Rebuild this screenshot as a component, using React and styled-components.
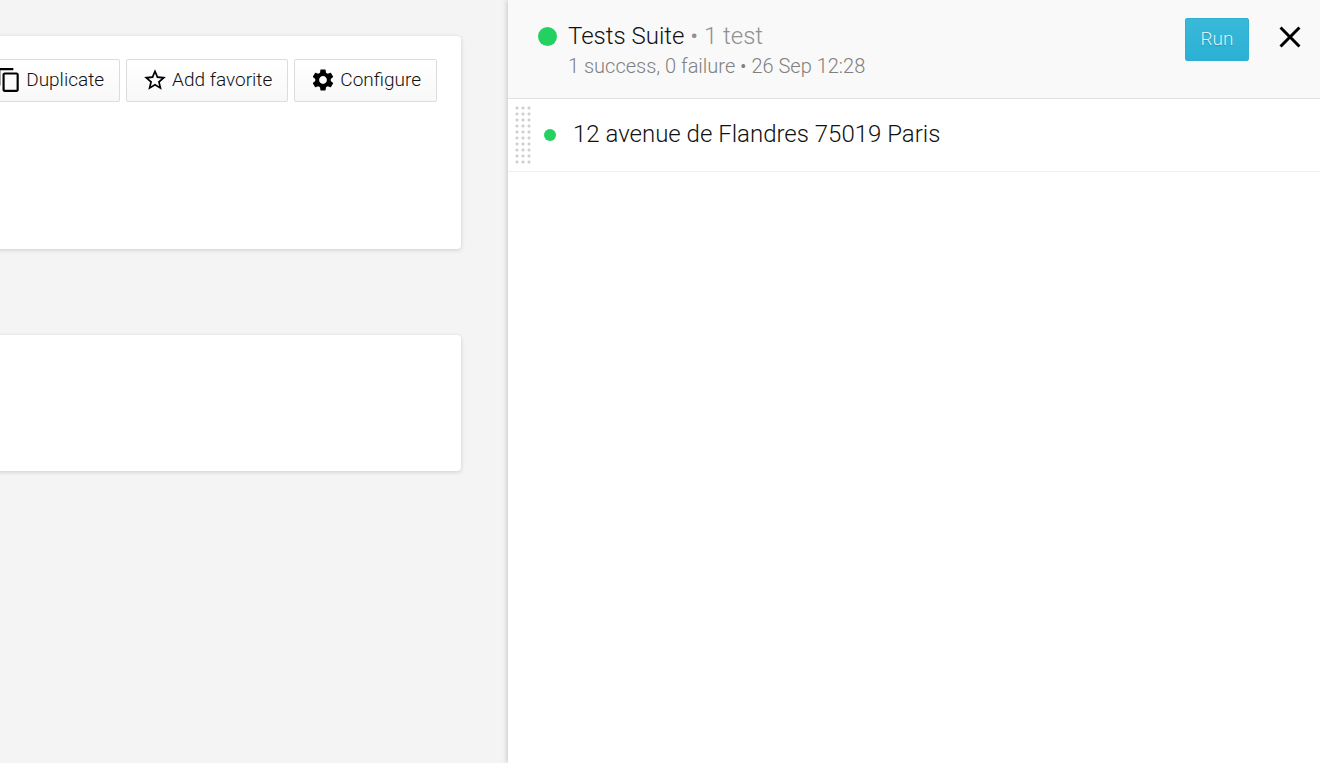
import React from "react";
import styled, { createGlobalStyle } from "styled-components";
import { MdClose, MdContentCopy, MdSettings, MdStarBorder } from "react-icons/md";

const GlobalStyle = createGlobalStyle`
  *, *::before, *::after { box-sizing: border-box; }
  body {
    margin: 0;
    background: #f4f4f4;
    color: #111;
    font-family: Roboto, "Liberation Sans", sans-serif;
    font-weight: 300;
  }
`;

const Layout = styled.div`
  display: grid;
  grid-template-columns: minmax(0, 127fr) minmax(0, 203fr);
  min-height: 100vh;
`;

const Workspace = styled.main`
  display: flex;
  flex-direction: column;
  gap: 86px;
  padding: 36px 47px 36px 0;
  overflow: hidden;
`;

const Card = styled.section`
  min-height: ${(p) => (p.$tall ? 213 : 136)}px;
  margin-left: -8px;
  padding: 23px 24px;
  background: #fff;
  border-radius: 4px;
  box-shadow: 0 1px 4px rgba(0, 0, 0, 0.16);
`;

const Toolbar = styled.div`
  display: flex;
  justify-content: flex-end;
  gap: 6px;
`;

const ToolButton = styled.button`
  display: flex;
  flex: none;
  align-items: center;
  gap: 4px;
  height: 43px;
  padding: 0 15px 2px;
  border: 1px solid #dcdcdc;
  border-radius: 2px;
  background: linear-gradient(#fff, #f8f8f8);
  color: #111;
  font: inherit;
  font-size: 19px;
  line-height: 24px;
  cursor: pointer;

  svg {
    width: 26px;
    height: 26px;
    color: #000;
  }
`;

const Panel = styled.aside`
  background: #fff;
  box-shadow: 0 0 6px rgba(0, 0, 0, 0.25);
`;

const PanelHeader = styled.header`
  display: flex;
  align-items: flex-start;
  min-height: 99px;
  padding: 18px 12px 18px 30px;
  border-bottom: 1px solid #e2e2e2;
  background: #f9f9f9;
`;

const StatusDot = styled.span`
  flex: none;
  width: ${(p) => p.$size}px;
  height: ${(p) => p.$size}px;
  border-radius: 50%;
  background: #22d160;
`;

const Summary = styled.div`
  display: grid;
  grid-template-columns: 19px minmax(0, 1fr);
  column-gap: 11px;
  align-items: center;
  flex: 1;
`;

const Title = styled.h2`
  margin: 0;
  font-size: 24px;
  font-weight: 300;
  line-height: 36px;
`;

const Muted = styled.span`
  color: #909090;
`;

const Details = styled.p`
  grid-column: 2;
  margin: 0;
  color: #808080;
  font-size: 20px;
  line-height: 24px;
`;

const Actions = styled.div`
  display: flex;
  align-items: flex-start;
  gap: 23px;
`;

const RunButton = styled.button`
  min-width: 64px;
  height: 43px;
  padding: 0 12px 3px;
  border: 1px solid #2eb0d2;
  border-radius: 2px;
  background: linear-gradient(#3ab9da, #2bb0d3);
  color: #dff4fa;
  font: inherit;
  font-size: 19px;
  text-shadow: 0 1px 1px rgba(0, 0, 0, 0.2);
  cursor: pointer;
`;

const CloseButton = styled.button`
  display: flex;
  padding: 1px 0 0;
  border: 0;
  background: none;
  color: #000;
  cursor: pointer;
`;

const TestList = styled.ul`
  margin: 0;
  padding: 0;
  list-style: none;
`;

const TestItem = styled.li`
  display: flex;
  align-items: center;
  height: 73px;
  padding-left: 6px;
  border-bottom: 1px solid #efefef;
`;

const DragHandle = styled.span`
  flex: none;
  width: 18px;
  height: 60px;
  margin-right: 12px;
  background: radial-gradient(circle at 3px 3px, #cfcfcf 1px, transparent 2px) 0 0 / 6px 6px;
  cursor: grab;
`;

const TestName = styled.span`
  margin-left: 17px;
  padding-bottom: 3px;
  font-size: 24px;
  line-height: 36px;
`;

export default function App() {
  return (
    <>
      <GlobalStyle />
      <Layout>
        <Workspace>
          <Card $tall>
            <Toolbar>
              <ToolButton type="button"><MdContentCopy />Duplicate</ToolButton>
              <ToolButton type="button"><MdStarBorder />Add favorite</ToolButton>
              <ToolButton type="button"><MdSettings />Configure</ToolButton>
            </Toolbar>
          </Card>
          <Card />
        </Workspace>
        <Panel>
          <PanelHeader>
            <Summary>
              <StatusDot $size={19} />
              <Title>Tests Suite <Muted>• 1 test</Muted></Title>
              <Details>1 success, 0 failure • 26 Sep 12:28</Details>
            </Summary>
            <Actions>
              <RunButton type="button">Run</RunButton>
              <CloseButton type="button" aria-label="Close"><MdClose size={36} /></CloseButton>
            </Actions>
          </PanelHeader>
          <TestList>
            <TestItem>
              <DragHandle />
              <StatusDot $size={12} />
              <TestName>12 avenue de Flandres 75019 Paris</TestName>
            </TestItem>
          </TestList>
        </Panel>
      </Layout>
    </>
  );
}
